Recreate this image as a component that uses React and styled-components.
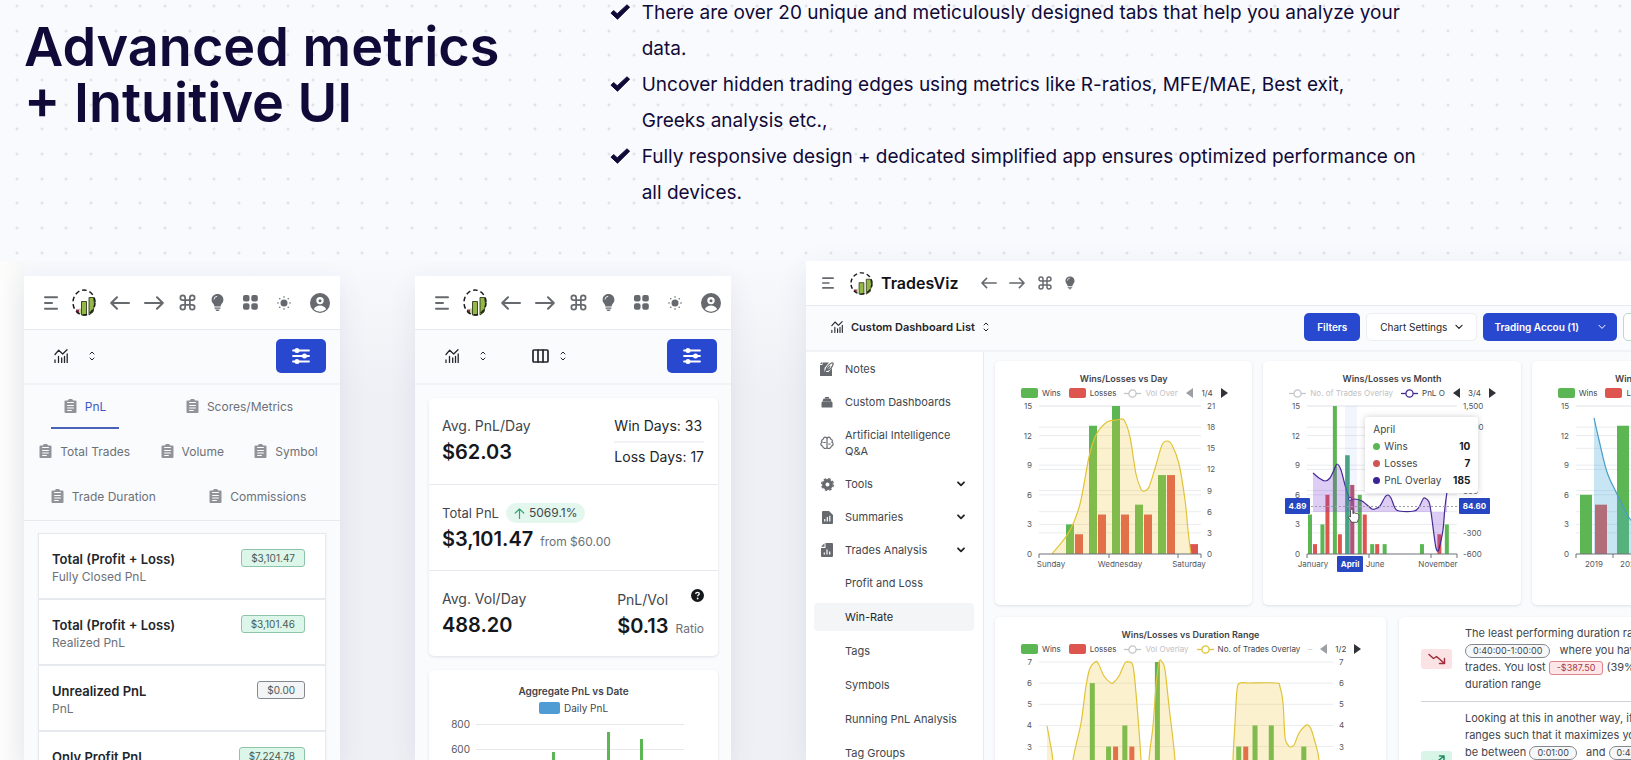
import React from "react";
import styled, { createGlobalStyle, css } from "styled-components";
import { Command } from "lucide-react";

const c = {
  navy: "#110a38",
  blue: "#2848cf",
  ink: "#22262b",
  text: "#42464c",
  muted: "#6c7178",
  line: "#e6e9ee",
  panel: "#fafbfd",
  green: "#5cb653",
  red: "#de554f",
  yellow: "#e0c437",
  purple: "#452a94",
};

const GlobalStyle = createGlobalStyle`
  *, *::before, *::after { box-sizing: border-box; }
  body { margin: 0; background: #f9fafe; font-family: Inter, "Liberation Sans", sans-serif; color: ${c.text}; }
  h1, h2, h3, p, ul { margin: 0; padding: 0; }
  ul { list-style: none; }
  button { font: inherit; color: inherit; background: none; border: 0; padding: 0; cursor: pointer; }
  a { color: inherit; text-decoration: none; }
  svg { display: block; flex: none; }
`;

/* ---------- hero ---------- */

const Page = styled.main`
  height: 100vh;
  overflow: hidden;
  display: flex;
  flex-direction: column;
`;

const dot = (x, y) =>
  `radial-gradient(circle at ${x}px ${y}px, #dfe0e6 0, #e4e5eb 1px, transparent 2px)`;

const Hero = styled.section`
  flex: none;
  padding: 0 24px 56px;
  background-color: #f9fafe;
  background-image: ${[6, 31, 55].flatMap((y) => [17, 42, 66].map((x) => dot(x, y))).join(",")};
  background-size: 74px 74px;
`;

const HeroInner = styled.div`
  display: flex;
  align-items: center;
  height: 205px;
`;

const Heading = styled.h1`
  flex: 0 0 37%;
  align-self: flex-start;
  padding-top: 19px;
  font-size: 54px;
  line-height: 56px;
  font-weight: 600;
  color: ${c.navy};
`;

const Points = styled.ul`
  max-width: 815px;
  color: ${c.navy};
  font-size: 19px;
  line-height: 36px;
`;

const Point = styled.li`
  display: flex;
  gap: 12px;
  svg { margin-top: 9px; }
`;

/* ---------- showcase ---------- */

const Showcase = styled.section`
  flex: 1;
  min-height: 0;
  display: flex;
  align-items: stretch;
  gap: 75px;
  padding-left: 24px;
  background: linear-gradient(90deg, #fdfdfc 0, #f6f7f7 24px, transparent 24px),
    linear-gradient(#f8f9fd 0, #eef0f5 130px);
`;

const Phone = styled.article`
  flex: 0 0 316px;
  margin-top: 15px;
  background: ${c.panel};
  border-radius: 4px 4px 0 0;
  box-shadow: 0 8px 28px rgba(60, 70, 110, 0.09);
`;

const PhoneHeader = styled.header`
  display: flex;
  justify-content: space-between;
  align-items: center;
  height: 54px;
  padding: 0 10px 0 20px;
  background: #fff;
  border-bottom: 1px solid ${c.line};
  color: #66696e;
`;

const IconGroup = styled.div`
  display: flex;
  align-items: center;
  gap: ${(p) => p.$gap || 14}px;
`;

const IconButton = styled.button`
  display: flex;
  align-items: center;
  justify-content: center;
`;

const PhoneBar = styled.div`
  display: flex;
  align-items: center;
  height: 55px;
  padding: 0 14px 2px 30px;
  border-bottom: 2px solid #f1f3f6;
  color: ${c.ink};
`;

const PickerButton = styled(IconButton)`
  gap: ${(p) => p.$gap}px;
  margin-right: 46px;
`;

const BlueButton = styled.button`
  display: flex;
  align-items: center;
  justify-content: center;
  background: ${c.blue};
  color: #fff;
  border-radius: 5px;
  font-weight: 600;
`;

const SlidersButton = styled(BlueButton)`
  width: 50px;
  height: 34px;
  margin-left: auto;
`;

const TabRows = styled.nav`
  padding-right: 7px;
  border-bottom: 1px solid ${c.line};
`;

const TabRow = styled.div`
  display: flex;
  justify-content: space-around;
  height: 45px;
`;

const Tab = styled.button`
  display: flex;
  align-items: center;
  gap: 8px;
  height: 44px;
  padding: 0 13px;
  font-size: 12px;
  color: ${(p) => (p.$active ? "#4258c4" : c.muted)};
  border-bottom: 2px solid ${(p) => (p.$active ? "#4a62b8" : "transparent")};
  svg { color: #90939a; }
`;

const StatList = styled.ul`
  margin: 12px 14px 0;
  background: #fff;
  border: 1px solid ${c.line};
  border-bottom: 0;
  box-shadow: 0 1px 3px rgba(40, 50, 80, 0.06);
`;

const StatItem = styled.li`
  display: flex;
  justify-content: space-between;
  align-items: flex-start;
  height: 66px;
  padding: 15px 20px 0 13px;
  border-bottom: 2px solid ${c.line};
`;

const StatTitle = styled.h3`
  font-size: 13px;
  line-height: 20px;
  font-weight: 600;
  color: ${c.ink};
`;

const StatSub = styled.p`
  font-size: 12px;
  line-height: 16px;
  color: ${c.muted};
`;

const MoneyBadge = styled.span`
  padding: 0 9px;
  font-size: 10px;
  line-height: 16px;
  border-radius: 3px;
  color: #4b5b55;
  border: 1px solid ${(p) => (p.$neutral ? "#85888e" : "#8fc4ab")};
  background: ${(p) => (p.$neutral ? "#f3f4f6" : "#dcf6e9")};
`;

/* ---------- metrics phone ---------- */

const Card = styled.section`
  background: #fff;
  border-radius: 5px;
  box-shadow: 0 1px 3px rgba(40, 50, 80, 0.13);
`;

const Metrics = styled(Card)`
  margin: 13px 13px 14px 14px;
`;

const MetricRow = styled.div`
  display: flex;
  justify-content: space-between;
  height: 86px;
  padding: 18px 14px 0 13px;
  & + & { border-top: 1px solid ${c.line}; }
`;

const Label = styled.p`
  display: flex;
  align-items: center;
  gap: 7px;
  font-size: ${(p) => (p.$compact ? 13 : 14)}px;
  line-height: 20px;
`;

const Amount = styled.p`
  font-size: 20px;
  line-height: 32px;
  font-weight: 600;
  color: #14171c;
  small { margin-left: 7px; font-size: 12px; font-weight: 400; color: ${c.muted}; }
`;

const Trend = styled.span`
  display: inline-flex;
  align-items: center;
  gap: 4px;
  padding: 0 8px;
  font-size: 12px;
  border-radius: 10px;
  background: #e4f7ee;
  svg { color: #39a277; }
`;

const DayCounts = styled.ul`
  font-size: 14px;
  color: ${c.ink};
  li { line-height: 28px; height: 28px; margin-top: -4px; }
  li + li { margin-top: 1px; border-top: 2px solid #f1f2f5; }
`;

const SpreadLabel = styled(Label)`
  justify-content: space-between;
  svg { margin-bottom: 8px; }
`;

const PhoneChart = styled(Card)`
  margin: 0 13px 0 14px;
  padding-top: 15px;
`;

const DailyLegend = styled.div`
  display: flex;
  justify-content: center;
  align-items: center;
  gap: 4px;
  height: 18px;
  margin-top: 2px;
  font-size: 10px;
`;

const DailySvg = styled.svg`
  font-size: 10px;
  fill: #55585e;
`;

/* ---------- laptop ---------- */

const Laptop = styled.article`
  flex: 1 0 995px;
  display: flex;
  flex-direction: column;
  background: ${c.panel};
  box-shadow: 0 8px 28px rgba(60, 70, 110, 0.09);
`;

const LaptopHeader = styled.header`
  display: flex;
  align-items: center;
  height: 45px;
  padding-left: 16px;
  background: #fff;
  border-bottom: 1px solid ${c.line};
  color: #66696e;
`;

const Brand = styled.a`
  display: flex;
  align-items: center;
  gap: 8px;
  margin: 0 23px 0 16px;
  color: #101216;
  font-size: 16px;
  font-weight: 600;
`;

const LaptopBar = styled.div`
  display: flex;
  align-items: center;
  gap: 6px;
  height: 46px;
  padding: 0 10px 3px 25px;
  border-bottom: 2px solid #f1f3f6;
  font-size: 10px;
`;

const DashboardPicker = styled.button`
  display: flex;
  align-items: center;
  gap: 8px;
  margin-right: auto;
  font-size: 11px;
  font-weight: 600;
  color: ${c.ink};
`;

const FilterButton = styled(BlueButton)`
  height: 28px;
  padding: 0 ${(p) => p.$pad || 13}px;
  gap: 19px;
`;

const OutlineButton = styled.button`
  display: flex;
  align-items: center;
  gap: 8px;
  height: 28px;
  padding: 0 13px;
  background: #fff;
  border: 1px solid ${(p) => p.$edge || "#eceef2"};
  border-radius: 5px;
  color: ${c.ink};
`;

const DateRange = styled(OutlineButton)`
  width: 168px;
`;

const Body = styled.div`
  display: flex;
  flex: 1;
  min-height: 0;
`;

const Sidebar = styled.nav`
  flex: 0 0 178px;
  padding: 3px 9px 0 8px;
  background: #fff;
  border-right: 1px solid ${c.line};
  overflow: hidden;
`;

const NavList = styled.ul`
  display: flex;
  flex-direction: column;
  gap: ${(p) => p.$gap}px;
`;

const NavLink = styled.a`
  display: flex;
  align-items: center;
  gap: 9px;
  min-height: 28px;
  padding: 6px 8px 6px 4px;
  font-size: 11px;
  line-height: 16px;
  border-radius: 4px;
  & > svg { margin-left: auto; color: ${c.ink}; }
  ${(p) => p.$sub && css`padding: 0 4px 0 31px;`}
  ${(p) => p.$active && css`background: #f3f5f7; color: ${c.ink};`}
`;

const NavIcon = styled.span`
  flex: 0 0 18px;
  display: flex;
  justify-content: center;
  color: #66696e;
`;

const Board = styled.div`
  flex: 1;
  display: flex;
  flex-direction: column;
  gap: 12px;
  padding: 9px 12px 0 11px;
`;

const BoardRow = styled.div`
  display: grid;
  grid-template-columns: ${(p) => p.$cols};
  gap: ${(p) => p.$gap || 11}px;
`;

const ChartCard = styled(Card)`
  position: relative;
  height: 244px;
  padding-top: 12px;
`;

const ChartTitle = styled.h2`
  text-align: center;
  font-size: ${(p) => p.$size || 9}px;
  line-height: 12px;
  font-weight: 600;
  color: #3f4248;
`;

const Legend = styled.div`
  display: flex;
  align-items: center;
  height: 12px;
  margin: 2px 0 1px 26px;
  font-size: 8px;
  line-height: 12px;
  white-space: nowrap;
`;

const LegendItem = styled.span`
  display: flex;
  align-items: center;
  gap: 4px;
  margin-right: 8px;
  color: ${(p) => (p.$off ? "#bfc1c5" : c.text)};
`;

const LegendText = styled.span`
  width: ${(p) => (p.$clip ? p.$clip + "px" : "auto")};
  overflow: hidden;
`;

const Swatch = styled.i`
  width: ${(p) => p.$w || 17}px;
  height: ${(p) => (p.$w ? 12 : 10)}px;
  border-radius: 2px;
  background: ${(p) => p.$color};
`;

const Pager = styled.span`
  display: flex;
  align-items: center;
  gap: 8px;
`;

const Tooltip = styled.div`
  position: absolute;
  left: 102px;
  top: 56px;
  width: 113px;
  padding: 4px 8px;
  background: #fff;
  border-radius: 3px;
  box-shadow: 0 0 6px rgba(40, 40, 60, 0.22);
  font-size: 10px;
  line-height: 17px;
`;

const TipRow = styled.div`
  display: flex;
  align-items: center;
  gap: 4px;
  i { width: 7px; height: 7px; border-radius: 50%; background: ${(p) => p.$color}; }
  b { margin-left: auto; color: #15181c; }
`;

const Insights = styled(Card)`
  padding: 8px 0 0 22px;
  overflow: hidden;
`;

const Insight = styled.div`
  display: grid;
  grid-template-columns: 31px 1fr;
  gap: 13px;
  align-items: center;
  min-height: ${(p) => p.$min}px;
  & + & { border-top: 1px solid #cfd2d6; margin-top: 8px; padding-top: 8px; }
`;

const InsightIcon = styled.span`
  display: flex;
  align-items: center;
  justify-content: center;
  height: 20px;
  border-radius: 3px;
  color: ${(p) => (p.$up ? "#1f8a63" : "#a12d3c")};
  background: ${(p) => (p.$up ? "#d9f5e8" : "#fbe3e5")};
`;

const InsightText = styled.p`
  align-self: start;
  font-size: 11px;
  line-height: 17px;
  white-space: nowrap;
`;

const Pill = styled.span`
  display: inline-block;
  padding: 0 7px;
  font-size: 9px;
  line-height: 12px;
  color: ${(p) => (p.$loss ? "#a83a44" : c.text)};
  border: 1px solid ${(p) => (p.$loss ? "#e0838a" : "#85888e")};
  background: ${(p) => (p.$loss ? "#fde6e8" : "#f6f7f9")};
  border-radius: ${(p) => (p.$loss ? 3 : 8)}px;
  margin-right: ${(p) => (p.$loss ? 0 : 6)}px;
`;

/* ---------- icons ---------- */

const Stroke = ({ w, h = w, vb, sw = 2, children }) => (
  <svg width={w} height={h} viewBox={vb} fill="none" stroke="currentColor" strokeWidth={sw} strokeLinecap="round" strokeLinejoin="round" aria-hidden="true">
    {children}
  </svg>
);

const CheckMark = () => (
  <svg width="20" height="16" viewBox="0 0 20 16" aria-hidden="true">
    <path d="M1 9.2 3.6 6.6 7.3 9.8 17 .8 19.6 3.2 7.5 15.2Z" fill={c.navy} stroke={c.navy} strokeWidth="1" strokeLinejoin="round" />
  </svg>
);
const MenuIcon = ({ s = 14 }) => (
  <Stroke w={s} vb="0 0 14 14" sw={2}><path d="M1 1.3h12M1 7h7M1 12.7h12" /></Stroke>
);
const ArrowLeft = ({ s = 20 }) => (
  <Stroke w={s} h={14} vb="0 0 20 14" sw={2}><path d="M19 7H1.5M7 1.2 1.2 7 7 12.8" /></Stroke>
);
const ArrowRight = ({ s = 20 }) => (
  <Stroke w={s} h={14} vb="0 0 20 14" sw={2}><path d="M1 7h17.5M13 1.2 18.8 7 13 12.8" /></Stroke>
);
const Bulb = ({ s = 13 }) => (
  <svg width={s} height={s + 4} viewBox="0 0 13 17" fill="currentColor" aria-hidden="true">
    <path d="M6.5 0C2.9 0 .6 2.6.6 5.7c0 2.1 1 3.1 1.9 4.4.5.8.8 1.5.9 2.4h6.2c.1-.9.4-1.6.9-2.4.9-1.3 1.9-2.3 1.9-4.4C12.4 2.6 10.1 0 6.5 0Z" />
    <path d="M3.6 13.5h5.8v1.2H3.6zM4.4 15.4h4.2c-.3 1-1 1.5-2.1 1.5s-1.8-.5-2.1-1.5Z" />
    <path d="M3 5.5A3.3 3.3 0 0 1 6.2 2.3" stroke="#fff" strokeWidth=".9" fill="none" />
  </svg>
);
const GridIcon = () => (
  <svg width="15" height="15" viewBox="0 0 15 15" fill="currentColor" aria-hidden="true">
    {[0, 8.3].map((x) => [0, 8.3].map((y) => <rect key={x + "-" + y} x={x} y={y} width="6.5" height="6.5" rx="2" />))}
  </svg>
);
const Sun = () => (
  <svg width="14" height="14" viewBox="0 0 14 14" fill="currentColor" aria-hidden="true">
    <circle cx="7" cy="7" r="3.5" />
    {[0, 45, 90, 135, 180, 225, 270, 315].map((a) => (
      <circle key={a} cx={7 + 6 * Math.cos((a * Math.PI) / 180)} cy={7 + 6 * Math.sin((a * Math.PI) / 180)} r=".8" />
    ))}
  </svg>
);
const UserIcon = () => (
  <svg width="20" height="20" viewBox="0 0 20 20" aria-hidden="true">
    <circle cx="10" cy="10" r="10" fill="#66696e" />
    <circle cx="10" cy="7.6" r="3.7" fill="#fff" />
    <path d="M3.8 16.2c1.2-2.7 3.6-3.8 6.2-3.8s5 1.1 6.2 3.8a9 9 0 0 1-12.4 0Z" fill="#fff" />
    <circle cx="10" cy="7.8" r="1.5" fill="#66696e" />
  </svg>
);
const Logo = ({ w = 24, h = 27 }) => (
  <svg width={w} height={h} viewBox="0 0 24 27" preserveAspectRatio="none" aria-hidden="true">
    <path d="M4 20.5h3.5v4.5L4 22.5Z" fill="#8a3048" />
    <path d="M9.5 12.5h5V26h-5ZM17 8.5h4.5l1 6.5-1.5 8-4 3Z" fill="#94b748" stroke="#2d3a17" strokeWidth=".9" />
    <path d="M7 19.5h2V25H7Z" fill="#c6d7a0" />
    <ellipse cx="12" cy="13.5" rx="11" ry="12.5" fill="none" stroke="#17191c" strokeWidth="1.5" strokeDasharray="4.6 3" />
  </svg>
);
const TrendBars = ({ s = 14 }) => (
  <Stroke w={s} vb="0 0 14 14" sw={1.3}>
    <path d="M1 5.5 4.7 1.2l4 3.8L13 .8M1 11v2.4M4.5 7.5v5.9M7.7 9v4.4M10.5 7.5v5.9M13.2 5v8.4" />
  </Stroke>
);
const UpDown = () => (
  <Stroke w={6} h={10} vb="0 0 6 10" sw={1}><path d="M1 3 3 1l2 2M1 7l2 2 2-2" /></Stroke>
);
const ColumnsIcon = () => (
  <Stroke w={17} h={14} vb="0 0 17 14" sw={1.7}><rect x="1" y="1" width="15" height="12" rx="1" /><path d="M6 1v12M11 1v12" /></Stroke>
);
const Sliders = () => (
  <svg width="18" height="16" viewBox="0 0 18 16" stroke="#fff" fill="#fff" strokeWidth="1.8" strokeLinecap="round" aria-hidden="true">
    <path d="M1 2.5h16M1 8h16M1 13.5h16" />
    <circle cx="5" cy="2.5" r="1.6" /><circle cx="12.5" cy="8" r="1.6" /><circle cx="5" cy="13.5" r="1.6" />
  </svg>
);
const Clipboard = () => (
  <svg width="13" height="14" viewBox="0 0 13 14" aria-hidden="true">
    <path d="M1.5 1.5h2.2L5 0h3l1.3 1.5h2.2a1 1 0 0 1 1 1V13a1 1 0 0 1-1 1h-10a1 1 0 0 1-1-1V2.5a1 1 0 0 1 1-1Z" fill="currentColor" />
    <path d="M3.2 3.5h6.6M3.2 6.5h6.6M3.2 9h6.6M3.2 11.5h4.6" stroke="#fff" strokeWidth="1" />
  </svg>
);
const ChevronDown = ({ w = 8, sw = 1.8 }) => (
  <Stroke w={w} h={6} vb="0 0 8 6" sw={sw}><path d="M1 1.3 4 4.4 7 1.3" /></Stroke>
);
const ArrowUp = () => (
  <Stroke w={11} vb="0 0 11 11" sw={1.2}><path d="M5.5 10.5V1M1.3 5l4.2-4.2L9.7 5" /></Stroke>
);
const Help = () => (
  <svg width="13" height="13" viewBox="0 0 13 13" role="img" aria-label="Help">
    <circle cx="6.5" cy="6.5" r="6.5" fill="#15181c" />
    <path d="M4.7 5c0-1.2.8-1.7 1.8-1.7s1.8.6 1.8 1.5c0 1.2-1.7 1.2-1.7 2.4" fill="none" stroke="#fff" strokeWidth="1.3" />
    <circle cx="6.6" cy="9.5" r=".9" fill="#fff" />
  </svg>
);
const navIcons = {
  notes: (
    <svg width="14" height="14" viewBox="0 0 14 14" aria-hidden="true">
      <path d="M0 3 2.5 3V.5H9L4.5 6v4h4L12 6v8H0Z" fill="currentColor" />
      <path d="M0 2 2 0v2Z" fill="currentColor" />
      <path d="M5.8 8.5C6 6 8.5 2.5 11.5 1c1.5-.4 2 .5 1.5 1.5-1 3-3.5 5.3-6 6ZM4.5 10.5 10 4" fill="#fff" stroke="currentColor" strokeWidth="1.2" />
    </svg>
  ),
  boards: (
    <svg width="12" height="11" viewBox="0 0 13 12" fill="currentColor" aria-hidden="true">
      <path d="M4.5 0h4l.6 1.5H3.9ZM2.5 2h8l.8 2.5H1.7ZM1.5 5h10l1 1v4.5a1 1 0 0 1-1 1h-10a1 1 0 0 1-1-1V6Z" />
    </svg>
  ),
  brain: (
    <Stroke w={14} vb="0 0 14 14" sw={1.2}>
      <path d="M7 2.5v9M7 2.5C6.2.5 3.6.8 3.5 3 1.6 3.2 1.2 5.3 2.2 6.3.2 7 .6 9.8 2.6 10c.1 2.5 3.6 3.3 4.4 1.5M7 2.5C7.8.5 10.4.8 10.5 3c1.9.2 2.3 2.3 1.3 3.3 2 .7 1.6 3.5-.4 3.7-.1 2.5-3.6 3.3-4.4 1.5M3.8 6.5h1.5M8.7 8h1.5" />
    </Stroke>
  ),
  gear: (
    <svg width="13" height="13" viewBox="0 0 13 13" aria-hidden="true">
      <circle cx="6.5" cy="6.5" r="3.7" fill="none" stroke="currentColor" strokeWidth="3.4" />
      <circle cx="6.5" cy="6.5" r="5.8" fill="none" stroke="currentColor" strokeWidth="1.4" strokeDasharray="2.6 1.95" />
    </svg>
  ),
  doc: (
    <svg width="11" height="13" viewBox="0 0 11 13" aria-hidden="true">
      <path d="M1 0h6l4 4v8a1 1 0 0 1-1 1H1a1 1 0 0 1-1-1V1a1 1 0 0 1 1-1Z" fill="currentColor" />
      <path d="M2.8 10.5V8M5.3 10.5V6M7.8 10.5V4.8" stroke="#fff" strokeWidth="1.2" />
    </svg>
  ),
  report: (
    <svg width="12" height="14" viewBox="0 0 12 14" aria-hidden="true">
      <path d="M4.5 0H11a1 1 0 0 1 1 1v12a1 1 0 0 1-1 1H1a1 1 0 0 1-1-1V5h4.5ZM0 3.8 3.5.3v3.5Z" fill="currentColor" />
      <path d="M3.3 11.5V9.5M6 11.5V6.5M8.7 11.5V8.5" stroke="#fff" strokeWidth="1.2" />
    </svg>
  ),
};
const TrendIcon = ({ up }) => (
  <Stroke w={18} h={12} vb="0 0 18 12" sw={1.5}>
    {up ? <path d="M1 9.5 5 5.5l3 2 7.500-6M11.5 1H16v4.5M8 7.5 9.5 9" /> : <path d="M1 1.5 5.5 5.5 8.5 3.5 16 10M11.5 10.5h5v-5" />}
  </Stroke>
);
const LineMarker = ({ color }) => (
  <svg width="17" height="9" viewBox="0 0 17 9" aria-hidden="true">
    <path d="M0 4.5h17" stroke={color} strokeWidth="1.3" />
    <circle cx="8.5" cy="4.5" r="3.6" fill="#fff" stroke={color} strokeWidth="1.3" />
  </svg>
);
const PageArrow = ({ right, off }) => (
  <svg width="7" height="10" viewBox="0 0 7 10" aria-hidden="true">
    <path d={right ? "M0 0v10L7 5Z" : "M7 0v10L0 5Z"} fill={off ? "#9c9fa3" : "#2f3338"} />
  </svg>
);

/* ---------- charts ---------- */

const smooth = (pts) => {
  let d = `M${pts[0][0]} ${pts[0][1]}`;
  for (let i = 0; i < pts.length - 1; i++) {
    const p0 = pts[i - 1] || pts[i];
    const [p1, p2] = [pts[i], pts[i + 1]];
    const p3 = pts[i + 2] || p2;
    d += `C${p1[0] + (p2[0] - p0[0]) / 6} ${p1[1] + (p2[1] - p0[1]) / 6} ${p2[0] - (p3[0] - p1[0]) / 6} ${p2[1] - (p3[1] - p1[1]) / 6} ${p2[0]} ${p2[1]}`;
  }
  return d;
};

const H = 148;

const PlotSvg = styled.svg`
  overflow: hidden;
  font-size: 8px;
  fill: #55585e;
`;

const Grid = ({ width, steps }) =>
  Array.from({ length: steps }, (_, i) => (
    <path key={i} d={`M0 ${(i * H) / steps}H${width}`} stroke="#e9ebee" strokeWidth="1" />
  ));

const Plot = ({ view, width, left, right, bars, band, barW, offs, max, ticks, labels, curves = [], line, fill, base = H, children }) => (
  <PlotSvg width={view} height="172" viewBox={`-44 -6 ${view} 172`} aria-hidden="true">
    <Grid width={width} steps={left.length - 1} />
    {right.length !== left.length && <Grid width={width} steps={right.length - 1} />}
    {left.map((t, i) => (
      <text key={i} x="-7" y={(i * H) / (left.length - 1) + 3} textAnchor="end">{t}</text>
    ))}
    {right.map((t, i) => t !== null && (
      <text key={i} x={width + 6} y={(i * H) / (right.length - 1) + 3}>{t}</text>
    ))}
    {bars.map(([i, g, r]) => (
      <g key={i}>
        {g > 0 && <rect x={i * band + offs[0]} y={H - (g * H) / max} width={barW} height={(g * H) / max} fill={c.green} />}
        {r > 0 && <rect x={i * band + offs[1]} y={H - (r * H) / max} width={barW} height={(r * H) / max} fill={c.red} />}
      </g>
    ))}
    {curves.map((pts, i) => (
      <g key={i}>
        <path d={`${smooth(pts)}V${base}H${pts[0][0]}Z`} fill={fill} />
        <path d={smooth(pts)} fill="none" stroke={line} strokeWidth="1.2" />
      </g>
    ))}
    <path d={`M0 ${H}H${width}${ticks.map((t) => `M${t} ${H}v4`).join("")}`} stroke="#6d7076" strokeWidth="1" />
    {labels.map(([x, t]) => (
      <text key={t} x={x} y={H + 13} textAnchor="middle">{t}</text>
    ))}
    {children}
  </PlotSvg>
);

const Tag = ({ x, y, w, children }) => (
  <g>
    <rect x={x} y={y} width={w} height="16" rx="1" fill="#2646c2" />
    <text x={x + w / 2} y={y + 11} textAnchor="middle" fill="#fff" fontWeight="700">{children}</text>
  </g>
);

const dayCurve = [[13,148],[30,126],[41,98],[50,51],[57,29],[68,16],[78,14],[85,14],[91,31],[97,68],[102,83],[105,85],[110,81],[117,59],[123,39],[128,35],[133,39],[140,58],[146,94],[149,124],[151,141],[152,148]];
const monthCurve = [[6,67],[12,72],[18,75],[23,72],[27,64],[30,58],[34,64],[38,79],[43,93],[48,93],[55,95],[60,99],[65,103],[68,103],[73,100],[78,91],[81,89],[84,92],[88,102],[92,105],[107,105],[112,101],[116,93],[118,92],[122,96],[124,106],[127,129],[129,142],[131,145],[133,139],[136,124],[138,101],[140,86]];
const yearCurve = [[18,12],[23,34],[31,66],[40,86],[48,102],[54,113],[70,130],[90,142]];
const durationCurves = [
  [[8,64],[11,80],[14,100],[17,148]],
  [[28,148],[34,98],[42,61],[47,24],[51,6],[56,0],[59,1],[65,14],[72,21],[75,20],[80,14],[86,1],[90,0],[94,4],[97,31],[102,98],[104,148]],
  [[108,148],[110,98],[114,64],[117,24],[120,0],[123,0],[126,8],[130,44],[136,98],[138,148]],
  [[193,148],[194,98],[196,61],[198,28],[201,21],[209,21],[237,21],[241,25],[244,41],[246,75],[249,83],[251,85],[255,83],[260,71],[266,64],[269,63],[272,67],[276,80],[280,98],[284,148]],
];
const by3 = [15, 12, 9, 6, 3, 0];
const yellowFill = "rgba(238, 200, 60, 0.25)";

const WinLoss = () => (
  <>
    <LegendItem><Swatch $color={c.green} />Wins</LegendItem>
    <LegendItem><Swatch $color={c.red} />Losses</LegendItem>
  </>
);

const Paging = ({ children, first }) => (
  <Pager>
    <PageArrow off={first} />
    <span>{children}</span>
    <PageArrow right />
  </Pager>
);

/* ---------- sections ---------- */

const HeaderIcons = () => (
  <PhoneHeader>
    <IconGroup>
      <IconButton aria-label="Menu"><MenuIcon /></IconButton>
      <Logo />
      <IconButton aria-label="Back"><ArrowLeft /></IconButton>
      <IconButton aria-label="Forward"><ArrowRight /></IconButton>
      <IconButton aria-label="Commands"><Command size={19} strokeWidth={2.2} /></IconButton>
    </IconGroup>
    <IconGroup $gap={19}>
      <IconButton aria-label="Tips"><Bulb /></IconButton>
      <IconButton aria-label="Apps"><GridIcon /></IconButton>
      <IconButton aria-label="Theme"><Sun /></IconButton>
      <IconButton aria-label="Account"><UserIcon /></IconButton>
    </IconGroup>
  </PhoneHeader>
);

const tabs = [["PnL", "Scores/Metrics"], ["Total Trades", "Volume", "Symbol"], ["Trade Duration", "Commissions"]];
const stats = [
  ["Total (Profit + Loss)", "Fully Closed PnL", "$3,101.47"],
  ["Total (Profit + Loss)", "Realized PnL", "$3,101.46"],
  ["Unrealized PnL", "PnL", "$0.00"],
  ["Only Profit PnL", "", "$7,224.78"],
];

const StatsPhone = () => (
  <Phone>
    <HeaderIcons />
    <PhoneBar>
      <PickerButton $gap={21} aria-label="Dashboard"><TrendBars /><UpDown /></PickerButton>
      <SlidersButton aria-label="Filters"><Sliders /></SlidersButton>
    </PhoneBar>
    <TabRows>
      {tabs.map((row) => (
        <TabRow key={row[0]}>
          {row.map((t) => <Tab key={t} $active={t === "PnL"}><Clipboard />{t}</Tab>)}
        </TabRow>
      ))}
    </TabRows>
    <StatList>
      {stats.map(([title, sub, value], i) => (
        <StatItem key={i}>
          <div><StatTitle>{title}</StatTitle><StatSub>{sub}</StatSub></div>
          <MoneyBadge $neutral={value === "$0.00"}>{value}</MoneyBadge>
        </StatItem>
      ))}
    </StatList>
  </Phone>
);

const MetricsPhone = () => (
  <Phone>
    <HeaderIcons />
    <PhoneBar>
      <PickerButton $gap={21} aria-label="Dashboard"><TrendBars /><UpDown /></PickerButton>
      <PickerButton $gap={11} aria-label="Columns"><ColumnsIcon /><UpDown /></PickerButton>
      <SlidersButton aria-label="Filters"><Sliders /></SlidersButton>
    </PhoneBar>
    <Metrics>
      <MetricRow>
        <div><Label>Avg. PnL/Day</Label><Amount>$62.03</Amount></div>
        <DayCounts><li>Win Days: 33</li><li>Loss Days: 17</li></DayCounts>
      </MetricRow>
      <MetricRow>
        <div>
          <Label $compact>Total PnL <Trend><ArrowUp />5069.1%</Trend></Label>
          <Amount>$3,101.47<small>from $60.00</small></Amount>
        </div>
      </MetricRow>
      <MetricRow>
        <div><Label>Avg. Vol/Day</Label><Amount>488.20</Amount></div>
        <div><SpreadLabel>PnL/Vol <Help /></SpreadLabel><Amount>$0.13<small>Ratio</small></Amount></div>
      </MetricRow>
    </Metrics>
    <PhoneChart>
      <ChartTitle $size={10}>Aggregate PnL vs Date</ChartTitle>
      <DailyLegend><Swatch $w={21} $color="#4f9bd3" />Daily PnL</DailyLegend>
      <DailySvg width="289" height="60" viewBox="0 0 289 60" aria-hidden="true">
        <path d="M47 7.5H255M47 32.5H255" stroke="#e6e8ec" />
        <text x="41" y="11" textAnchor="end">800</text>
        <text x="41" y="36" textAnchor="end">600</text>
        <path d="M124.5 35v25M179.5 15v45M212.5 22v38" stroke={c.green} strokeWidth="3" />
      </DailySvg>
    </PhoneChart>
  </Phone>
);

const topNav = [
  ["Notes", "notes"],
  ["Custom Dashboards", "boards"],
  ["Artificial Intelligence Q&A", "brain"],
  ["Tools", "gear", true],
  ["Summaries", "doc", true],
  ["Trades Analysis", "report", true],
];
const subNav = ["Profit and Loss", "Win-Rate", "Tags", "Symbols", "Running PnL Analysis", "Tag Groups"];

const Dashboard = () => (
  <Laptop>
    <LaptopHeader>
      <IconButton aria-label="Menu"><MenuIcon s={12} /></IconButton>
      <Brand href="#"><Logo w={23} h={23} />TradesViz</Brand>
      <IconGroup $gap={12}>
        <IconButton aria-label="Back"><ArrowLeft s={16} /></IconButton>
        <IconButton aria-label="Forward"><ArrowRight s={16} /></IconButton>
        <IconButton aria-label="Commands"><Command size={16} strokeWidth={2.2} /></IconButton>
        <IconButton aria-label="Tips"><Bulb s={10} /></IconButton>
      </IconGroup>
    </LaptopHeader>
    <LaptopBar>
      <DashboardPicker><TrendBars s={12} />Custom Dashboard List<UpDown /></DashboardPicker>
      <FilterButton>Filters</FilterButton>
      <OutlineButton>Chart Settings <ChevronDown sw={1.2} /></OutlineButton>
      <FilterButton $pad={11}>Trading Accou (1) <ChevronDown sw={1} /></FilterButton>
      <DateRange $edge="#b9dbc9" aria-label="Date range" />
    </LaptopBar>
    <Body>
      <Sidebar>
        <NavList $gap={5}>
          {topNav.map(([t, icon, open]) => (
            <li key={t}>
              <NavLink href="#"><NavIcon>{navIcons[icon]}</NavIcon><span>{t}</span>{open && <ChevronDown w={10} />}</NavLink>
            </li>
          ))}
          <li>
            <NavList $gap={6}>
              {subNav.map((t) => <li key={t}><NavLink href="#" $sub $active={t === "Win-Rate"}>{t}</NavLink></li>)}
            </NavList>
          </li>
        </NavList>
      </Sidebar>
      <Board>
        <BoardRow $cols="repeat(3, minmax(0, 1fr))">
          <ChartCard>
            <ChartTitle>Wins/Losses vs Day</ChartTitle>
            <Legend>
              <WinLoss />
              <LegendItem $off><LineMarker color="#c3c5c9" /><LegendText $clip={33}>Vol Overlay</LegendText></LegendItem>
              <Paging first>1/4</Paging>
            </Legend>
            <Plot view={257} width={162} left={by3} right={[21, 18, 15, 12, 9, 6, 3, 0]} max={15} band={23} barW={8} offs={[4, 13]}
              bars={[[1, 3, 2], [2, 13, 4], [3, 15, 4], [4, 5, 4], [5, 8, 8], [6, 0, 1]]}
              ticks={[0, 70, 139, 162]} labels={[[12, "Sunday"], [81, "Wednesday"], [150, "Saturday"]]}
              curves={[dayCurve]} line={c.yellow} fill={yellowFill} />
          </ChartCard>
          <ChartCard>
            <ChartTitle>Wins/Losses vs Month</ChartTitle>
            <Legend>
              <LegendItem $off><LineMarker color="#c3c5c9" /><LegendText>No. of Trades Overlay</LegendText></LegendItem>
              <LegendItem><LineMarker color={c.purple} /><LegendText $clip={23}>PnL Overlay</LegendText></LegendItem>
              <Paging>3/4</Paging>
            </Legend>
            <Plot view={257} width={150} left={by3} right={["1,500", "1,200", null, null, "300", null, "-300", "-600"]} max={15} band={12.44} barW={4} offs={[1, 6]}
              bars={[[0, 4, 1], [1, 3, 6], [2, 15, 2], [3, 10, 7], [4, 6, 4], [5, 1, 1], [6, 1, 0], [9, 1, 0], [10, 0, 2], [11, 3, 0]]}
              ticks={[0, 62, 124, 150]} labels={[[6, "January"], [68, "June"], [131, "November"]]}
              curves={[monthCurve]} line={c.purple} fill="rgba(120, 50, 210, 0.25)" base={106}>
              <rect x="38" y="0" width="12" height={H} fill="rgba(70, 110, 220, 0.07)" />
              <rect x="38" y={H - 98.7} width="5" height="98.7" fill="rgba(50, 150, 170, 0.5)" />
              <rect x="43" y={H - 69} width="4" height="69" fill="rgba(130, 80, 170, 0.4)" />
              <path d="M0 100.5H150" stroke="#9a9da3" strokeDasharray="2 2" />
              <circle cx="43" cy="93" r="1.5" fill="#fff" stroke={c.purple} />
              <Tag x={-22} y={92} w={25}>4.89</Tag>
              <Tag x={152} y={92} w={31}>84.60</Tag>
              <Tag x={30} y={150} w={26}>April</Tag>
              <path d="M43.5 104.5c0-1.8 2.4-1.8 2.4 0v3l1.6-.6 1.6.5 1.5.3 1.2 1.1v3.5l-1.5 4h-5.5l-3.2-4.5c-.7-1.3.9-2 1.7-1l.2.3Z" fill="#fff" stroke="#33363c" strokeWidth=".8" />
            </Plot>
            <Tooltip>
              <div>April</div>
              <TipRow $color={c.green}><i />Wins<b>10</b></TipRow>
              <TipRow $color="#cf5654"><i />Losses<b>7</b></TipRow>
              <TipRow $color="#3c2494"><i />PnL Overlay<b>185</b></TipRow>
            </Tooltip>
          </ChartCard>
          <ChartCard>
            <ChartTitle>Wins/Losses vs Year</ChartTitle>
            <Legend><WinLoss /></Legend>
            <Plot view={257} width={162} left={by3} right={[21, 18, 15, 12, 9, 6, 3, 0]} max={15} band={37} barW={12} offs={[4, 19]}
              bars={[[0, 6, 5], [1, 13, 0]]} ticks={[0, 37]} labels={[[18, "2019"], [54, "2020"]]}
              curves={[yearCurve]} line="#4a9cc9" fill="rgba(74, 170, 220, 0.3)" />
          </ChartCard>
        </BoardRow>
        <BoardRow $cols="minmax(0, 391px) minmax(0, 1fr)" $gap={13}>
          <ChartCard>
            <ChartTitle>Wins/Losses vs Duration Range</ChartTitle>
            <Legend>
              <WinLoss />
              <LegendItem $off><LineMarker color="#c3c5c9" /><LegendText>Vol Overlay</LegendText></LegendItem>
              <LegendItem><LineMarker color={c.yellow} />No. of Trades Overlay</LegendItem>
              <LegendItem $off>–</LegendItem>
              <Paging first>1/2</Paging>
            </Legend>
            <Plot view={391} width={294} left={[7, 6, 5, 4, 3, 2, 1, 0]} right={[7, 6, 5, 4, 3, 2, 1, 0]} max={7} band={16.27} barW={5} offs={[2, 9]}
              bars={[[3, 6, 0], [4, 3, 3], [5, 4, 3], [7, 7, 0], [12, 3, 3], [13, 4, 0], [14, 4, 0], [16, 3, 0]]}
              ticks={[0]} labels={[]} curves={durationCurves} line={c.yellow} fill={yellowFill} />
          </ChartCard>
          <Insights>
            <Insight $min={68}>
              <InsightIcon><TrendIcon /></InsightIcon>
              <InsightText>
                The least performing duration range is<br />
                <Pill>0:40:00-1:00:00</Pill> where you have<br />
                trades. You lost <Pill $loss>-$387.50</Pill> (39%)<br />
                duration range
              </InsightText>
            </Insight>
            <Insight $min={111}>
              <InsightIcon $up><TrendIcon up /></InsightIcon>
              <InsightText>
                Looking at this in another way, if<br />
                ranges such that it maximizes your<br />
                be between <Pill>0:01:00</Pill> and <Pill>0:40:00</Pill>
              </InsightText>
            </Insight>
          </Insights>
        </BoardRow>
      </Board>
    </Body>
  </Laptop>
);

const points = [
  "There are over 20 unique and meticulously designed tabs that help you analyze your data.",
  "Uncover hidden trading edges using metrics like R-ratios, MFE/MAE, Best exit, Greeks\u00a0analysis etc.,",
  "Fully responsive design + dedicated simplified app ensures optimized performance on all devices.",
];

export default function App() {
  return (
    <Page>
      <GlobalStyle />
      <Hero>
        <HeroInner>
          <Heading>Advanced metrics<br />+ Intuitive UI</Heading>
          <Points>
            {points.map((p) => <Point key={p}><CheckMark /><span>{p}</span></Point>)}
          </Points>
        </HeroInner>
      </Hero>
      <Showcase>
        <StatsPhone />
        <MetricsPhone />
        <Dashboard />
      </Showcase>
    </Page>
  );
}
